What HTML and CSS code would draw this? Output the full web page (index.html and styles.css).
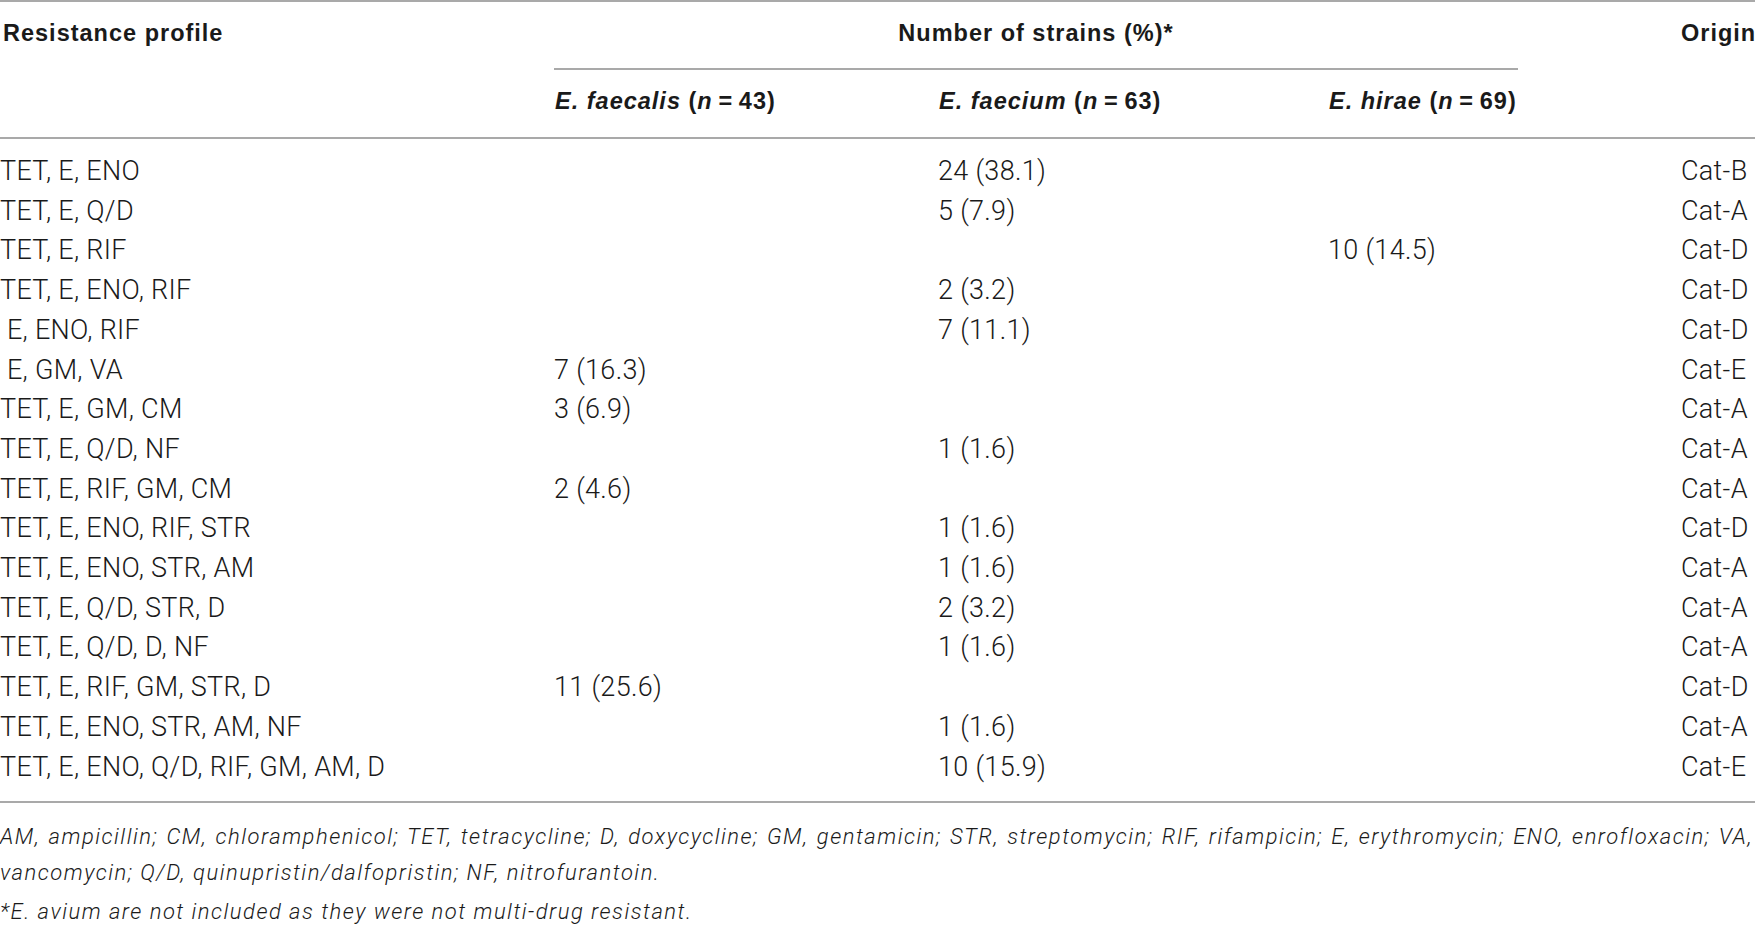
FILE: index.html
```html
<!DOCTYPE html>
<html lang="en">
<head>
  <meta charset="UTF-8">
  <title>Multi-drug resistance profiles of enterococci</title>
  <meta name="viewport" content="width=device-width, initial-scale=1.0">
  <link rel="stylesheet" href="styles.css">
</head>
<body>
  <div class="table-wrap">
    <table class="res-table">
      <colgroup>
        <col class="c-profile">
        <col class="c-species">
        <col class="c-species2">
        <col class="c-species3">
        <col class="c-origin">
      </colgroup>
      <thead>
        <tr class="head-top">
          <th rowspan="2" class="th-main">Resistance profile</th>
          <th colspan="3" class="th-group"><div class="group-rule">Number of strains (%)*</div></th>
          <th rowspan="2" class="th-main">Origin</th>
        </tr>
        <tr class="head-sub">
          <th><em>E. faecalis</em> (<em>n</em>&thinsp;=&thinsp;43)</th>
          <th><em>E. faecium</em> (<em>n</em>&thinsp;=&thinsp;63)</th>
          <th><em>E. hirae</em> (<em>n</em>&thinsp;=&thinsp;69)</th>
        </tr>
      </thead>
      <tbody>
        <tr><td>TET, E, ENO</td><td></td><td>24 (38.1)</td><td></td><td>Cat-B</td></tr>
        <tr><td>TET, E, Q/D</td><td></td><td>5 (7.9)</td><td></td><td>Cat-A</td></tr>
        <tr><td>TET, E, RIF</td><td></td><td></td><td>10 (14.5)</td><td>Cat-D</td></tr>
        <tr><td>TET, E, ENO, RIF</td><td></td><td>2 (3.2)</td><td></td><td>Cat-D</td></tr>
        <tr><td>&nbsp;E, ENO, RIF</td><td></td><td>7 (11.1)</td><td></td><td>Cat-D</td></tr>
        <tr><td>&nbsp;E, GM, VA</td><td>7 (16.3)</td><td></td><td></td><td>Cat-E</td></tr>
        <tr><td>TET, E, GM, CM</td><td>3 (6.9)</td><td></td><td></td><td>Cat-A</td></tr>
        <tr><td>TET, E, Q/D, NF</td><td></td><td>1 (1.6)</td><td></td><td>Cat-A</td></tr>
        <tr><td>TET, E, RIF, GM, CM</td><td>2 (4.6)</td><td></td><td></td><td>Cat-A</td></tr>
        <tr><td>TET, E, ENO, RIF, STR</td><td></td><td>1 (1.6)</td><td></td><td>Cat-D</td></tr>
        <tr><td>TET, E, ENO, STR, AM</td><td></td><td>1 (1.6)</td><td></td><td>Cat-A</td></tr>
        <tr><td>TET, E, Q/D, STR, D</td><td></td><td>2 (3.2)</td><td></td><td>Cat-A</td></tr>
        <tr><td>TET, E, Q/D, D, NF</td><td></td><td>1 (1.6)</td><td></td><td>Cat-A</td></tr>
        <tr><td>TET, E, RIF, GM, STR, D</td><td>11 (25.6)</td><td></td><td></td><td>Cat-D</td></tr>
        <tr><td>TET, E, ENO, STR, AM, NF</td><td></td><td>1 (1.6)</td><td></td><td>Cat-A</td></tr>
        <tr><td>TET, E, ENO, Q/D, RIF, GM, AM, D</td><td></td><td>10 (15.9)</td><td></td><td>Cat-E</td></tr>
      </tbody>
    </table>
  </div>

  <div class="notes">
    <p class="abbr">AM, ampicillin; CM, chloramphenicol; TET, tetracycline; D, doxycycline; GM, gentamicin; STR, streptomycin; RIF, rifampicin; E, erythromycin; ENO, enrofloxacin; VA, vancomycin; Q/D, quinupristin/dalfopristin; NF, nitrofurantoin.</p>
    <p class="star">*E. avium are not included as they were not multi-drug resistant.</p>
  </div>
</body>
</html>
```

FILE: styles.css
```css
:root {
  --ink: #1a1a1a;
  --rule: #a9a9a9;
}

* {
  box-sizing: border-box;
  margin: 0;
  padding: 0;
}

html, body {
  overflow: hidden;
}

body {
  background: #fff;
  color: var(--ink);
  font-family: Roboto, 'Liberation Sans', sans-serif;
  font-weight: 300;
}

.table-wrap {
  width: 1800px;
}

.res-table {
  width: 1800px;
  table-layout: fixed;
  border-collapse: collapse;
  border-top: 2px solid var(--rule);
}

.c-profile { width: 554px; }
.c-species { width: 384px; }
.c-species2 { width: 390px; }
.c-species3 { width: 353px; }
.c-origin { width: 119px; }

/* header */
th {
  font-family: 'Liberation Sans', Arial, sans-serif;
  font-weight: bold;
  font-size: 23.5px;
  letter-spacing: 1px;
  line-height: 30px;
  text-align: left;
  white-space: nowrap;
}

th em {
  font-style: italic;
}

.th-main {
  vertical-align: top;
  padding: 16px 0 0 3px;
  border-bottom: 2px solid var(--rule);
}

.head-top .th-main:last-child {
  padding-left: 0;
}

.th-group {
  padding: 16px 0 0;
}

.group-rule {
  margin-right: 163px;
  padding-bottom: 20px;
  border-bottom: 2px solid var(--rule);
  text-align: center;
}

.head-sub th {
  padding: 16px 0 21px 1px;
  border-bottom: 2px solid var(--rule);
}

/* body */
td {
  font-size: 27px;
  letter-spacing: 0.3px;
  line-height: 39.7px;
  white-space: nowrap;
  padding: 0;
  vertical-align: top;
}

tbody tr:first-child td {
  padding-top: 13px;
}

tbody tr:last-child td {
  padding-bottom: 14px;
  border-bottom: 2px solid var(--rule);
}

/* footnotes */
.notes {
  width: 1753px;
  margin-top: 16px;
  font-style: italic;
  font-size: 22px;
  letter-spacing: 1.5px;
  line-height: 36px;
}

.abbr {
  text-align: justify;
}

.star {
  margin-top: 3px;
}
```
